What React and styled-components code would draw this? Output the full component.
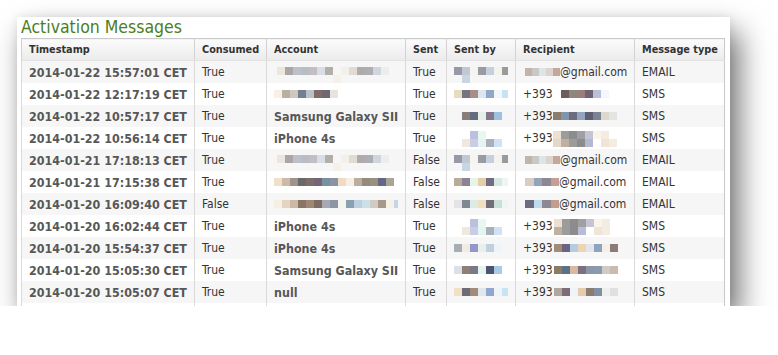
import React from "react";
import styled, { createGlobalStyle } from "styled-components";

const Global = createGlobalStyle`
  html, body { margin: 0; padding: 0; background: #ffffff; }
  body { font-family: "DejaVu Sans Condensed", "DejaVu Sans", sans-serif; }
`;

const Page = styled.div`
  padding: 17px 0 0 17px;
`;

const Card = styled.section`
  width: 713px;
  height: 289px;
  box-sizing: border-box;
  padding: 0 6px 0 4px;
  background: #ffffff;
  overflow: hidden;
  box-shadow: 9px 15px 28px rgba(0, 0, 0, 0.56), 0 0 9px rgba(0, 0, 0, 0.08);
`;

const Title = styled.h2`
  margin: 0;
  height: 21px;
  line-height: 21px;
  font-size: 17.5px;
  font-weight: normal;
  color: #4a8020;
  white-space: nowrap;
`;

const Table = styled.table`
  width: 703px;
  table-layout: fixed;
  border-collapse: collapse;
  border: 1px solid #c9c9c9;
  font-size: 12px;
  color: #333333;
`;

const Th = styled.th`
  height: 21px;
  padding: 0 7px;
  text-align: left;
  font-size: 10.8px;
  font-weight: bold;
  color: #333333;
  background: linear-gradient(#fbfbfb, #ebebeb);
  border-left: 1px solid #d2d2d2;
  border-bottom: 1px solid #e2e2e2;
  white-space: nowrap;
  overflow: hidden;
`;

const Tr = styled.tr`
  background: ${(p) => (p.$odd ? "#f6f6f6" : "#ffffff")};
`;

const Td = styled.td`
  height: 22px;
  padding: 0 7px;
  border-left: 1px solid #dadada;
  white-space: nowrap;
  overflow: hidden;
  vertical-align: middle;
  font-size: ${(p) => (p.$strong ? "12.4px" : "12px")};
  font-weight: ${(p) => (p.$strong ? "bold" : "normal")};
  color: ${(p) => (p.$strong ? "#575757" : "#333333")};
`;

const CellFlex = styled.div`
  display: flex;
  align-items: flex-start;
  height: 22px;
  overflow: hidden;
`;

const CellText = styled.span`
  line-height: 22px;
  flex: none;
`;

const MosaicBox = styled.div`
  display: flex;
  flex-direction: column;
  flex: none;
  height: 22px;
  box-sizing: border-box;
  padding-top: ${(p) => p.$top}px;
  padding-left: ${(p) => p.$pl}px;
`;

const MosaicLine = styled.div`
  display: flex;
  height: ${(p) => p.$h}px;
`;

const Block = styled.span`
  flex: none;
  width: ${(p) => p.$w}px;
  height: 100%;
  background: ${(p) => p.$c};
`;

function Mosaic({ m }) {
  const { top = 7, pl = 0, w = 8, h = 8, lines } = m;
  return (
    <MosaicBox $top={top} $pl={pl}>
      {lines.map((line, i) => (
        <MosaicLine key={i} $h={h}>
          {line.split(" ").map((c, j) => (
            <Block key={j} $w={w} $c={c === "-" ? "transparent" : "#" + c} />
          ))}
        </MosaicLine>
      ))}
    </MosaicBox>
  );
}

const acc1 = {
  top: 6,
  pl: 3,
  lines: [
    "ece6df aaa6a6 bcc0c9 b8bcc4 c3bec3 d8dde6 b4aea8 - f3f0ea e1dbd4 aeabad aeadb1 d0d6de eceeee",
    "- - - - - - - f6f1e8",
  ],
};
const acc2 = { lines: ["f6f1e4 b8b0a2 cfc8c0 748090 b8c2c8 816a68 6e6872 e6e4dc"] };
const acc6 = {
  pl: 0,
  lines: ["f0e0c8 cdb9a5 9e948c 6c6868 7c6e6c 746674 7890a2 8a94a2 f0dcc4 f4f0e4 bcae9e 968a7c 9a9080 646886 aaa494"],
};
const acc7 = {
  lines: ["f6f0e2 e4d4c2 ccb8a6 8a7464 9e8874 7e6c64 a6a8b4 8c96a6 f6f4ee 88a0b0 bcd0e2 cce0ea d0ccc4 a89a8a f6f2e6 c0d6ea"],
};

const s1 = {
  top: 6,
  lines: ["9898a8 c0c8d4 f6f4ee 9a9aa2 c4d0de f4f2ea 9a9a9a", "- c8d6e4"],
};
const s4 = {
  top: 4,
  lines: ["- - bcc0e0 eaf6f0", "- f0e8dc c8cce4 e4f4f0 a8b0b8 d0e2f4"],
};

const r1 = { pl: 2, w: 7, lines: ["c4b4a8 c8c8c4 dce4e8 dcd4cc c4a8a0"] };
const r4 = {
  top: 4,
  lines: [
    "ece0d0 9c9c9c 8c8c8c a0a0a4 c4c4d4 faf4e8 f4ece0",
    "e4d8c8 c0b0a0 9c9c9c 8c8c8c b4b8d0 ffffff f0e4d8 f4ece0",
  ],
};

const rows = [
  {
    ts: "2014-01-22 15:57:01 CET", consumed: "True", account: acc1, sent: "True", by: s1,
    rec: { pre: null, m: r1, post: "@gmail.com" }, type: "EMAIL",
  },
  {
    ts: "2014-01-22 12:17:19 CET", consumed: "True", account: acc2, sent: "True",
    by: { lines: ["e8dcc0 767480 a88e86 dce6ee 90a8c8 f4f6fa c8e4f4"] },
    rec: { pre: "+393", m: { pl: 0, lines: ["- 6c5c5c 8c8880 9c7c7c 6c6470 b8c0dc f4f8fc"] } }, type: "SMS",
  },
  {
    ts: "2014-01-22 10:57:17 CET", consumed: "True", account: "Samsung Galaxy SII", sent: "True",
    by: { lines: ["- 8a7e7a 666c80 e4f0e8 847888 a0c0e0"] },
    rec: { pre: "+393", m: { lines: ["8c7c6c 8094ac 6c6c7c 94a4c0 5c6070 7c8494 dcd8cc e4e4e4"] } }, type: "SMS",
  },
  {
    ts: "2014-01-22 10:56:14 CET", consumed: "True", account: "iPhone 4s", sent: "True", by: s4,
    rec: { pre: "+393", m: r4 }, type: "SMS",
  },
  {
    ts: "2014-01-21 17:18:13 CET", consumed: "True", account: acc1, sent: "False", by: s1,
    rec: { pre: null, m: r1, post: "@gmail.com" }, type: "EMAIL",
  },
  {
    ts: "2014-01-21 17:15:38 CET", consumed: "True", account: acc6, sent: "False",
    by: { lines: ["b8ac98 8c8494 e8f4e8 e4d0a8 746c80 d8e8e4 eef6f4"] },
    rec: { pre: null, m: { pl: 2, w: 8.5, lines: ["d8ccc4 94a4b8 8c8894 c4a094"] }, post: "@gmail.com" }, type: "EMAIL",
  },
  {
    ts: "2014-01-20 16:09:40 CET", consumed: "False", account: acc7, sent: "False",
    by: { lines: ["e4e4e4 7e8894 dcece4 f0e0c0 746c78 c8e0dc eef6f4"] },
    rec: { pre: null, m: { pl: 2, w: 8.5, lines: ["6c6c80 c0dcec 8c8894 c49c8c"] }, post: "@gmail.com" }, type: "EMAIL",
  },
  {
    ts: "2014-01-20 16:02:44 CET", consumed: "True", account: "iPhone 4s", sent: "True", by: s4,
    rec: {
      pre: "+393",
      m: {
        top: 4,
        pl: 1,
        lines: [
          "ece0d0 9c9c9c 8c8c8c a0a0a4 c4c4d4 faf4e8 f4ece0",
          "c0b0a0 9c9c9c 8c8c8c b8bcd4 - f0e4d8 f4ece0",
        ],
      },
    },
    type: "SMS",
  },
  {
    ts: "2014-01-20 15:54:37 CET", consumed: "True", account: "iPhone 4s", sent: "True",
    by: { lines: ["a8acb4 f0ece4 9498c8 e8f0ec c0d0dc eef4f8"] },
    rec: { pre: "+393", m: { pl: 1, lines: ["a08c78 6c6480 b4cce0 ecd4b4 e4e4ec 8ca4c0 f4f0e8 8c7c78"] } }, type: "SMS",
  },
  {
    ts: "2014-01-20 15:05:30 CET", consumed: "True", account: "Samsung Galaxy SII", sent: "True",
    by: { lines: ["dce0e8 8c8078 7c7888 e4f4ec 4c5470 a8cce8"] },
    rec: { pre: "+393", m: { pl: 1, lines: ["8c7c64 5c7088 dcb8a0 7c7080 8c98a8 8c9ab0 d0ccc4 c8bcb0"] } }, type: "SMS",
  },
  {
    ts: "2014-01-20 15:05:07 CET", consumed: "True", account: "null", sent: "True",
    by: { lines: ["f0e0c4 6c6c78 a08c78 e0e8ec 90a8d0 eef4f8 c8e4f4"] },
    rec: { pre: "+393", m: { pl: 1, lines: ["b0a8a0 7c6c78 eef4f8 e4ccac 8c7c70 8090a4 eef0ec e0e0e0"] } }, type: "SMS",
  },
];

const columns = [
  ["Timestamp", 173],
  ["Consumed", 72],
  ["Account", 139],
  ["Sent", 41],
  ["Sent by", 69],
  ["Recipient", 119],
  ["Message type", 90],
];

function AccountCell({ value }) {
  if (typeof value === "string") return <Td $strong>{value}</Td>;
  return (
    <Td>
      <CellFlex>
        <Mosaic m={value} />
      </CellFlex>
    </Td>
  );
}

function RecipientCell({ rec }) {
  return (
    <Td>
      <CellFlex>
        {rec.pre && <CellText>{rec.pre}</CellText>}
        <Mosaic m={rec.m} />
        {rec.post && <CellText>{rec.post}</CellText>}
      </CellFlex>
    </Td>
  );
}

export default function App() {
  return (
    <Page>
      <Global />
      <Card>
        <Title>Activation Messages</Title>
        <Table>
          <colgroup>
            {columns.map(([name, w]) => (
              <col key={name} style={{ width: w }} />
            ))}
          </colgroup>
          <thead>
            <tr>
              {columns.map(([name]) => (
                <Th key={name}>{name}</Th>
              ))}
            </tr>
          </thead>
          <tbody>
            {rows.map((r, i) => (
              <Tr key={i} $odd={i % 2 === 0}>
                <Td $strong>{r.ts}</Td>
                <Td>{r.consumed}</Td>
                <AccountCell value={r.account} />
                <Td>{r.sent}</Td>
                <Td>
                  <CellFlex>
                    <Mosaic m={r.by} />
                  </CellFlex>
                </Td>
                <RecipientCell rec={r.rec} />
                <Td>{r.type}</Td>
              </Tr>
            ))}
            <Tr $odd={false}>
              {columns.map(([name]) => (
                <Td key={name} />
              ))}
            </Tr>
          </tbody>
        </Table>
      </Card>
    </Page>
  );
}
